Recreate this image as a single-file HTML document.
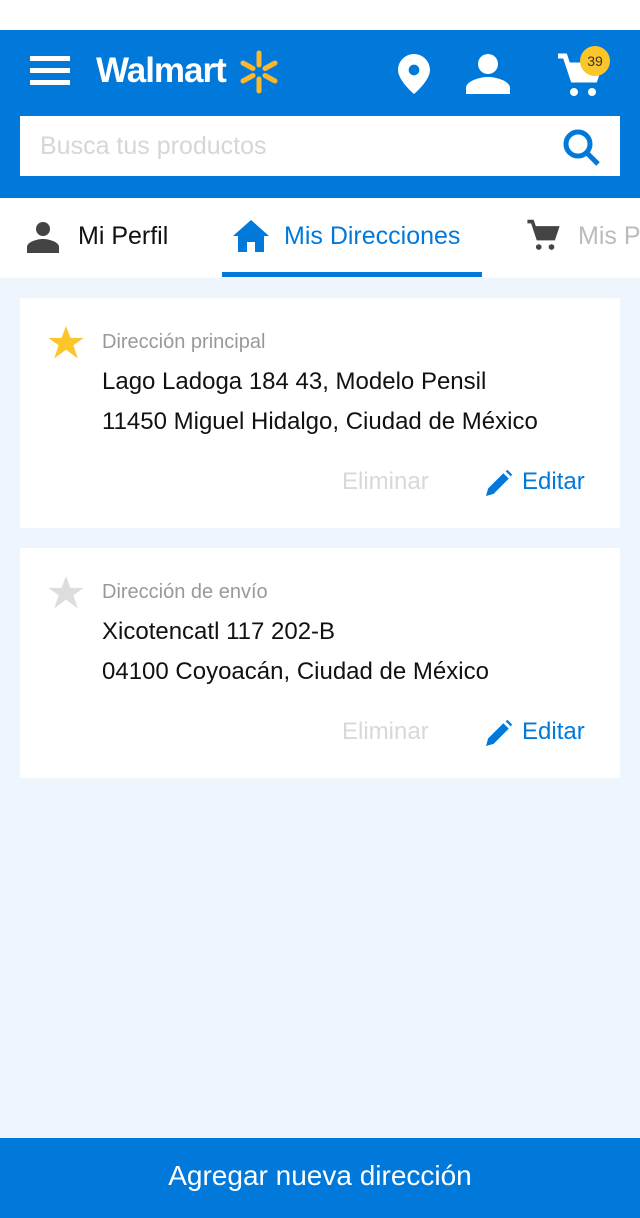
<!DOCTYPE html>
<html><head><meta charset="utf-8"><style>
*{margin:0;padding:0;box-sizing:border-box}
body{width:640px;height:1218px;background:#eef5fd;font-family:"Liberation Sans",sans-serif;position:relative;overflow:hidden}
.top{position:absolute;top:0;left:0;width:640px;height:30px;background:#fff}
.hdr{position:absolute;top:30px;left:0;width:640px;height:168px;background:#0079db}
.search{position:absolute;left:20px;top:86px;width:600px;height:60px;background:#fff}
.search span{position:absolute;left:20px;top:16px;font-size:25px;color:#d6d6d6}
.tabs{position:absolute;top:198px;left:0;width:640px;height:80px;background:#fff;overflow:hidden}
.tab{position:absolute;top:24px;font-size:25px;white-space:nowrap}
.card{position:absolute;left:20px;width:600px;height:230px;background:#fff}
.lbl{position:absolute;left:82px;top:33px;font-size:20px;color:#999}
.l1{position:absolute;left:82px;top:70px;font-size:24px;color:#111}
.l2{position:absolute;left:82px;top:110px;font-size:24px;color:#111}
.del{position:absolute;left:322px;top:170px;font-size:24px;color:#d8d8d8}
.ed{position:absolute;left:502px;top:170px;font-size:24px;color:#0079db}
.star{position:absolute;left:28px;top:28px}
.pen{position:absolute;left:466px;top:172px}
.btn{position:absolute;left:0;top:1138px;width:640px;height:80px;background:#0079db;color:#fff;font-size:28px;text-align:center;line-height:76px}
</style></head><body>
<div class="top"></div>
<div class="hdr">
<svg style="position:absolute;left:30px;top:26px" width="40" height="30"><rect y="0" width="40" height="5" fill="#fff"/><rect y="12" width="40" height="5" fill="#fff"/><rect y="24" width="40" height="5" fill="#fff"/></svg>
<div style="position:absolute;left:96px;top:21px;color:#fff;font-size:35px;font-weight:bold;letter-spacing:-1px">Walmart</div>
<svg style="position:absolute;left:236px;top:20px" width="46" height="44" viewBox="-23 -22 46 44"><g stroke="#fcb72e" stroke-width="5" stroke-linecap="round">
<line x1="0" y1="-7" x2="0" y2="-19"/><line x1="0" y1="7" x2="0" y2="19"/>
<line x1="-6" y1="-3.5" x2="-16" y2="-9"/><line x1="6" y1="-3.5" x2="16" y2="-9"/>
<line x1="-6" y1="3.5" x2="-16" y2="9"/><line x1="6" y1="3.5" x2="16" y2="9"/></g></svg>
<svg style="position:absolute;left:398px;top:24px" width="32" height="40" viewBox="0 0 24 30"><path d="M12 0C5.4 0 0 5.4 0 12c0 8 12 18 12 18s12-10 12-18C24 5.4 18.6 0 12 0zm0 16a4 4 0 110-8 4 4 0 010 8z" fill="#fff"/></svg>
<svg style="position:absolute;left:466px;top:24px" width="44" height="40" viewBox="0 0 44 40"><circle cx="22" cy="10" r="10" fill="#fff"/><path d="M0 40v-6c0-7 14-11 22-11s22 4 22 11v6z" fill="#fff"/></svg>
<svg style="position:absolute;left:556px;top:22px" width="48" height="46" viewBox="0 0 48 46"><path d="M2 4h7l8 24h22l5-15H12" fill="none" stroke="#fff" stroke-width="5"/><path d="M12 13h32l-5 15H17z" fill="#fff"/><circle cx="18" cy="40" r="4" fill="#fff"/><circle cx="36" cy="40" r="4" fill="#fff"/></svg>
<div style="position:absolute;left:580px;top:16px;width:30px;height:30px;border-radius:50%;background:#fcc52a;color:#333;font-size:14px;text-align:center;line-height:30px">39</div>
<div class="search"><span>Busca tus productos</span>
<svg style="position:absolute;left:542px;top:12px" width="40" height="38" viewBox="0 0 40 38"><circle cx="16" cy="16" r="12" fill="none" stroke="#0079db" stroke-width="5"/><line x1="25" y1="25" x2="36" y2="36" stroke="#0079db" stroke-width="5"/></svg></div>
</div>
<div class="tabs">
<svg style="position:absolute;left:27px;top:23px" width="32" height="32" viewBox="0 0 32 32"><circle cx="16" cy="8" r="7" fill="#444"/><path d="M0 32v-6c0-5 10-8 16-8s16 3 16 8v6z" fill="#444"/></svg>
<div class="tab" style="left:78px;color:#111">Mi Perfil</div>
<svg style="position:absolute;left:233px;top:22px" width="36" height="32" viewBox="0 0 36 32"><path d="M18 0L0 16h5v16h9V22h8v10h9V16h5z" fill="#0079db"/></svg>
<div class="tab" style="left:284px;color:#0079db">Mis Direcciones</div>
<div style="position:absolute;left:222px;top:74px;width:260px;height:5px;background:#0079db"></div>
<svg style="position:absolute;left:526px;top:20px" width="34" height="34" viewBox="0 0 48 46"><path d="M2 4h7l8 24h22l5-15H12" fill="none" stroke="#444" stroke-width="5"/><path d="M12 13h32l-5 15H17z" fill="#444"/><circle cx="18" cy="40" r="4" fill="#444"/><circle cx="36" cy="40" r="4" fill="#444"/></svg>
<div class="tab" style="left:578px;color:#bbb">Mis P</div>
</div>
<div class="card" style="top:298px">
<svg class="star" width="36" height="34" viewBox="0 0 24 23"><path d="M12 0l3 8h9l-7 5 3 9-8-6-8 6 3-9-7-5h9z" fill="#fcc52a"/></svg>
<div class="lbl">Dirección principal</div>
<div class="l1">Lago Ladoga 184 43, Modelo Pensil</div>
<div class="l2">11450 Miguel Hidalgo, Ciudad de México</div>
<div class="del">Eliminar</div>
<svg class="pen" width="26" height="26" viewBox="0 0 24 24"><path d="M0 24l2-7L16 3l5 5L7 22zM18 1l2-1 4 4-1 2z" fill="#0079db"/></svg>
<div class="ed">Editar</div>
</div>
<div class="card" style="top:548px">
<svg class="star" width="36" height="34" viewBox="0 0 24 23"><path d="M12 0l3 8h9l-7 5 3 9-8-6-8 6 3-9-7-5h9z" fill="#ddd"/></svg>
<div class="lbl">Dirección de envío</div>
<div class="l1">Xicotencatl 117 202-B</div>
<div class="l2">04100 Coyoacán, Ciudad de México</div>
<div class="del">Eliminar</div>
<svg class="pen" width="26" height="26" viewBox="0 0 24 24"><path d="M0 24l2-7L16 3l5 5L7 22zM18 1l2-1 4 4-1 2z" fill="#0079db"/></svg>
<div class="ed">Editar</div>
</div>
<div class="btn">Agregar nueva dirección</div>
</body></html>
